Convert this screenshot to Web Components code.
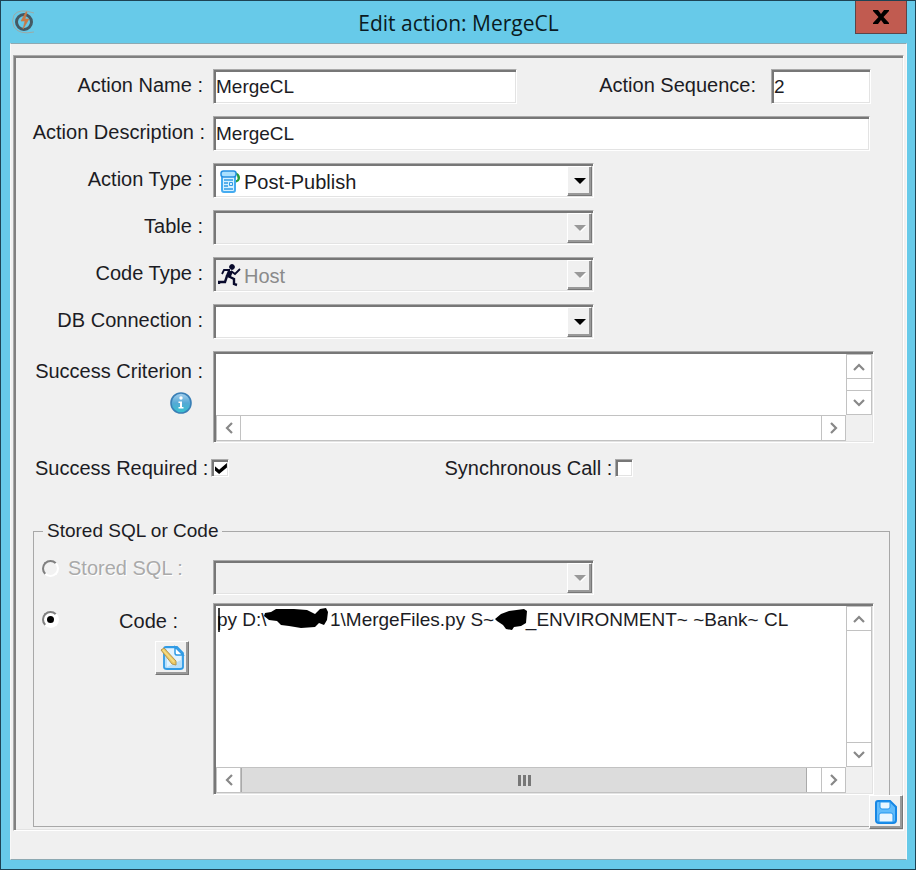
<!DOCTYPE html>
<html lang="en">
<head>
<meta charset="utf-8">
<title>Edit action: MergeCL</title>
<style>
body{margin:0;background:#fff;color:#1c1c24;font:20px/32px "Liberation Sans",Arial,sans-serif}
</style>
</head>
<body>
<dialog-window heading="Edit action: MergeCL">
  <field-stack>
    <field-row>
      <text-field label="Action Name :" value="MergeCL" style="--width:304px"></text-field>
      <text-field label="Action Sequence:" value="2" style="--width:100px;--label:auto;--gap:15px"></text-field>
    </field-row>
    <text-field label="Action Description :" value="MergeCL" style="--gap:8px;--end:4px"></text-field>
    <combo-field label="Action Type :" value="Post-Publish"><publish-icon slot="icon"></publish-icon></combo-field>
    <combo-field label="Table :" disabled></combo-field>
    <combo-field label="Code Type :" value="Host" disabled><runner-icon slot="icon"></runner-icon></combo-field>
    <combo-field label="DB Connection :"></combo-field>
    <memo-field label="Success Criterion :" style="--height:92px;--label-top:4px"><info-icon slot="tool"></info-icon></memo-field>
  </field-stack>
  <check-row></check-row>
  <code-group></code-group>
  <save-button slot="corner"></save-button>
</dialog-window>

<script>
const base = `<style>
*{box-sizing:border-box}
.sunken{border:1px solid;border-color:#aaa #fff #fff #aaa;box-shadow:inset 2px 2px #777,inset -1px -1px #e3e3e3;padding:2px 1px 1px 2px;background:#fff}
.raised{border:1px solid;border-color:#fff #777 #777 #fff;box-shadow:inset -2px -2px #999;background:#f0f0f0;padding:0;margin:0}
label{white-space:nowrap}
input,select,textarea,button{font:inherit;color:inherit;border-radius:0;margin:0;outline:0}
</style>`;

function define(name, render) {
  customElements.define(name, class extends HTMLElement {
    connectedCallback() {
      if (this.shadowRoot) return;
      const t = document.createElement('template');
      t.innerHTML = base + render(this);
      this.attachShadow({mode: 'open'}).append(t.content.cloneNode(true));
    }
  });
}

define('dialog-window', el => `<style>
:host{display:block;border:1px solid #1d4354;background:#67cae9;padding:0 8px 9px 9px}
header{display:grid;grid-template-columns:52px 1fr 52px;height:42px;align-items:center}
h1{margin:0;padding-top:2px;font:21px/28px "Open Sans","Noto Sans",sans-serif;text-align:center;color:#0a1a22}
.logo{width:24px;height:24px;margin-left:2px}
.close{align-self:start;height:33px;border:1px solid #5b4549;border-top:0;background:#c15b50;color:#000;padding:0;display:grid;place-items:center}
.client{border:1px solid #8fb5c2;border-color:#8da9b2 #f8f8f8 #8da9b2 #f8f8f8;background:#f0f0f0;padding:11px 2px 28px}
main{position:relative;border:1px solid;border-color:#aaa #fff #fff #aaa;box-shadow:inset 2px 2px #808080,inset -1px -1px #e3e3e3;padding:13px 13px 3px 2px}
::slotted([slot=corner]){position:absolute;right:0;bottom:1px}
</style>
<header>
 <svg class="logo" viewBox="0 0 24 24" fill="none" aria-hidden="true"><path d="M22 3Q7-2 2 5q-3 6 0 12 5 8 20 5" stroke="#9caaa5" stroke-width="1"/><circle cx="12" cy="12" r="7.500" stroke="#455963" stroke-width="3"/><path d="m14 2-5 9h4l-2 8 6-10h-4l2-7z" fill="#c97945" stroke="#c97945" stroke-width=".6"/></svg>
 <h1>${el.getAttribute('heading')}</h1>
 <button class="close" aria-label="Close"><svg width="18" height="16" viewBox="0 0 18 16"><path d="M1 1h5l3 4 3-4h5v1l-5.500 6 5.500 6v1h-5l-3-4-3 4H1v-1l5.500-6L1 2z" fill="#000"/></svg></button>
</header>
<div class="client"><main><slot></slot><slot name="corner"></slot></main></div>`);

define('field-stack', () => `<style>:host{display:flex;flex-direction:column;gap:12px;padding-right:16px}</style><slot></slot>`);
define('field-row', () => `<style>:host{display:flex;justify-content:space-between;padding-right:3px}</style><slot></slot>`);

define('text-field', el => `<style>
:host{display:grid;grid-template-columns:var(--label,197px) minmax(0,var(--width,1fr));padding-right:var(--end,0)}
label{text-align:right;padding-right:var(--gap,10px)}
input{font-size:19px;width:100%;height:35px;padding:0 4px}
</style><label for="f">${el.getAttribute('label')}</label><input id="f" class="sunken" value="${el.getAttribute('value')}">`);

const arrow = `<span class="drop raised"><svg width="12" height="6" viewBox="0 0 12 6" aria-hidden="true"><path d="M0 0h12L6 6z" fill="currentColor"/></svg></span>`;
const comboStyle = `
.combo{display:grid;grid-template:minmax(0,1fr)/auto 1fr 25px;width:100%;max-width:381px;height:35px}
.combo>*{grid-row:1}
select{grid-column:1/-1;appearance:none;border:0;background:none;padding:0 28px 0 var(--indent,4px);width:100%;height:100%;opacity:1}
.drop{grid-column:3;display:grid;place-items:center;pointer-events:none;color:#000}
.off{background:#f0f0f0;color:#8a8a8a}
.off .drop{color:#999}
.off svg{filter:drop-shadow(1px 1px #fff)}
`;
define('combo-field', el => {
  const off = el.hasAttribute('disabled');
  return `<style>
:host{display:grid;grid-template-columns:197px minmax(0,1fr)}
label{text-align:right;padding-right:10px}
${comboStyle}
slot{grid-column:1;display:grid;align-items:center;pointer-events:none}
::slotted(*){margin-left:3px}
.off ::slotted(*){margin-left:2px}
.combo{--indent:${el.children.length ? 28 : 4}px}
</style><label for="f">${el.getAttribute('label')}</label>
<div class="combo sunken ${off ? 'off' : ''}"><select id="f" ${off ? 'disabled' : ''}><option>${el.getAttribute('value') || ''}</option></select><slot name="icon"></slot>${arrow}</div>`;
});

const chev = d => `<svg width="12" height="12" viewBox="0 0 12 12" fill="none" stroke="#888" stroke-width="2.200" aria-hidden="true"><path d="${d}"/></svg>`;
define('memo-field', el => {
  const thumb = el.hasAttribute('thumb');
  return `<style>
:host{display:grid;grid-template-columns:var(--label,197px) minmax(0,1fr)}
.side{display:flex;flex-direction:column;align-items:flex-end;padding-top:var(--label-top,2px)}
label{padding-right:var(--gap,10px)}
::slotted([slot=tool]){margin:5px 21px 0 0}
.memo{position:relative;display:grid;grid-template:minmax(0,1fr) 26px/minmax(0,1fr) 26px;height:var(--height)}
textarea{border:0;padding:0 0 0 1px;resize:none;overflow:hidden;font-size:19px;line-height:28px;width:100%;height:100%;background:#fff}
.bar{display:flex;border:1px solid #c2c2c2}
.v{flex-direction:column}
.bar button{flex:0 0 24px;background:#fff;border:0 solid #c2c2c2;padding:0;display:grid;place-items:center}
.bar i{flex:1}
.v button:first-child{border-bottom-width:1px}.v button:last-child{border-top-width:1px}
.h button:first-child{border-right-width:1px}.h button:last-child{border-left-width:1px}
.thumb{flex:1;display:flex;gap:2px;align-items:center;justify-content:center;background:#dcdcdc;border:1px solid #aaa;border-width:0 1px;margin-right:14px}
.thumb b{width:3px;height:11px;background:#777}
.corner{background:#f0f0f0}
</style>
<div class="side"><label for="f">${el.getAttribute('label')}</label><slot name="tool"></slot></div>
<div class="memo sunken"><textarea id="f" wrap="off" spellcheck="false">${el.getAttribute('value') || ''}</textarea>
<div class="bar v"><button aria-label="Scroll up">${chev('M1 9l5-5 5 5')}</button><i></i><button aria-label="Scroll down">${chev('M1 3l5 5 5-5')}</button></div>
<div class="bar h"><button aria-label="Scroll left">${chev('M9 1 4 6l5 5')}</button>${thumb ? '<span class="thumb"><b></b><b></b><b></b></span>' : '<i></i>'}<button aria-label="Scroll right">${chev('M3 1l5 5-5 5')}</button></div>
<div class="corner"></div><slot name="over"></slot></div>`;
});

define('check-row', () => `<style>
:host{display:flex;gap:215px;padding:9px 17px 0 19px}
span{display:flex;align-items:center;gap:3px}
input{appearance:none;width:18px;height:18px;display:grid;place-items:center}
label{line-height:32px}
input:checked::before{content:"";width:12px;height:11px;background:#000;clip-path:polygon(0 30%,35% 62%,100% 0,100% 40%,35% 100%,0 68%)}
</style>
<span><label for="r">Success Required :</label><input id="r" type="checkbox" class="sunken" checked></span>
<span><label for="s">Synchronous Call :</label><input id="s" type="checkbox" class="sunken"></span>`);

define('code-group', () => `<style>
:host{display:block;padding:36px 0 0 17px}
fieldset{margin:0;min-width:0;border:1px solid #a8a8a8;padding:18px 15px 31px 0}
legend{margin-left:9px;padding:0 4px;font-size:19px;line-height:22px}
.row{display:grid;grid-template-columns:34px minmax(0,1fr);align-items:start}
.row+.row{margin-top:8px}
input{appearance:none;width:17px;height:17px;border-radius:50%;border:2px solid;border-color:#808080 #fff #fff #808080;margin:8px 0 0 8px;display:grid;place-items:center;background:#f2f2f2}
input:disabled{margin-top:0}
input:checked{background:#fff}
input:checked::before{content:"";width:7px;height:7px;border-radius:50%;background:#000}
.stored{display:grid;grid-template-columns:145px minmax(0,1fr)}
.stored label{color:#aaa;text-shadow:1px 1px #fff;line-height:16px}
${comboStyle}
.edit{width:34px;height:34px;display:grid;place-items:center;margin:4px 24px 0 0}
.blots{position:absolute;left:2px;top:2px;pointer-events:none}
memo-field{--label:145px;--gap:35px;--height:192px}
</style>
<fieldset><legend>Stored SQL or Code</legend>
<div class="row"><input type="radio" name="src" aria-label="Use stored SQL" disabled>
<div class="stored"><label for="q">Stored SQL :</label><div class="combo sunken off"><select id="q" disabled><option></option></select>${arrow}</div></div></div>
<div class="row"><input type="radio" name="src" aria-label="Use code" checked>
<memo-field label="Code :" thumb value="py D:\\            1\\MergeFiles.py S~      _ENVIRONMENT~ ~Bank~ CL">
<button slot="tool" class="edit raised" aria-label="Edit code"><svg width="26" height="26" viewBox="0 0 26 26"><path d="M7 2h11l6 6v14q0 2-3 2H8q-3 0-3-2V4q0-2 2-2z" fill="#b9e0fb" stroke="#309be5" stroke-width="1.800"/><path d="M8 4h8v7h6v4L8 22z" fill="#e2f3fe"/><path d="M16 2v6q0 2 2 2h6z" fill="#fff" stroke="#309be5" stroke-width="1.500"/><path d="m2 5 3-2 12 13 0 4-4-1z" fill="#ecc964" stroke="#b3954f"/><path d="m4 5 11 12" stroke="#f5dd86" stroke-width="1.500"/></svg></button>
<svg slot="over" class="blots" width="320" height="30" viewBox="0 0 320 30" aria-hidden="true"><path d="M3 2v24" stroke="#000" stroke-width="1.500"/><path d="M49 7l6-1 5-3 18 0 13 1 8 4 5-5 6-1 2 4-1 8-3 5-5-2-4 4-14 1-12-2-8-1-4-4-8-1-5-4z"/><path d="M279 13l6-5 8-3 15-2 3 2-1 12-5 3-7 1-2 3-6-1-3-4-6-4z"/></svg>
</memo-field></div>
</fieldset>`);

define('save-button', () => `<style>:host{display:block}button{width:34px;height:34px;display:grid;place-items:center}</style>
<button class="raised" aria-label="Save"><svg width="24" height="26" viewBox="0 0 24 26"><path d="M4 2h12l6 6v13q0 3-3 3H5q-3 0-3-3V4q0-2 2-2z" fill="#62bcfb" stroke="#1787e5" stroke-width="2"/><path d="M6 3h10v5q0 2-2 2H8q-2 0-2-2z" fill="#e8f6ff" stroke="#2396ef"/><path d="M5 23v-7q0-2 2-2h10q2 0 2 2v7z" fill="#eaf6ff" stroke="#2396ef"/></svg></button>`);

define('publish-icon', () => `<style>:host,svg{display:block}</style><svg width="23" height="25" viewBox="0 0 23 25" fill="none"><path d="M15 4q5 1 5 5 0 3-5 4" stroke="#269b3b" stroke-width="2"/><path d="m18 6 3 2-2 4z" fill="#269b3b"/><rect x="3" y="4" width="13" height="19" rx="2" fill="#d5f0ff" stroke="#45abf0" stroke-width="2"/><rect x="2" y="2" width="15" height="6" rx="2.500" fill="#a9e0ff" stroke="#258fe1" stroke-width="1.500"/><path d="M5 11h9M5 14h4M5 17h4M5 20h9" stroke="#309be5" stroke-width="1.300"/><path d="M10.500 13.500h3v3h-3z" stroke="#309be5"/></svg>`);
define('runner-icon', () => `<style>:host,svg{display:block}</style><svg width="23" height="24" viewBox="0 0 23 24" fill="none" stroke="#080a2c"><circle cx="14" cy="4" r="2.400" fill="#080a2c"/><path d="M12.500 8 10 14" stroke-width="5"/><path d="m12 7-6 0-2 4M13 8l4 3 5-5" stroke-width="1.800"/><path d="m10 13 6 3 0 5 3 1M9 13l-2 6-6 0 0 2" stroke-width="2.400"/></svg>`);
define('info-icon', () => `<style>:host,svg{display:block}</style><svg width="22" height="22" viewBox="0 0 22 22" role="img" aria-label="Information"><defs><linearGradient id="g" x2="0" y2="1"><stop stop-color="#a8d1ee"/><stop offset=".5" stop-color="#55a9d5"/><stop offset="1" stop-color="#35c2cf"/></linearGradient></defs><circle cx="11" cy="11" r="10" fill="url(#g)" stroke="#397fb6" stroke-width="1.600"/><circle cx="11" cy="6" r="1.700" fill="#fff"/><path d="M8.500 9.500H12V15h1.500v1.500h-5V15H10v-4H8.500z" fill="#fff"/></svg>`);
</script>
</body>
</html>
